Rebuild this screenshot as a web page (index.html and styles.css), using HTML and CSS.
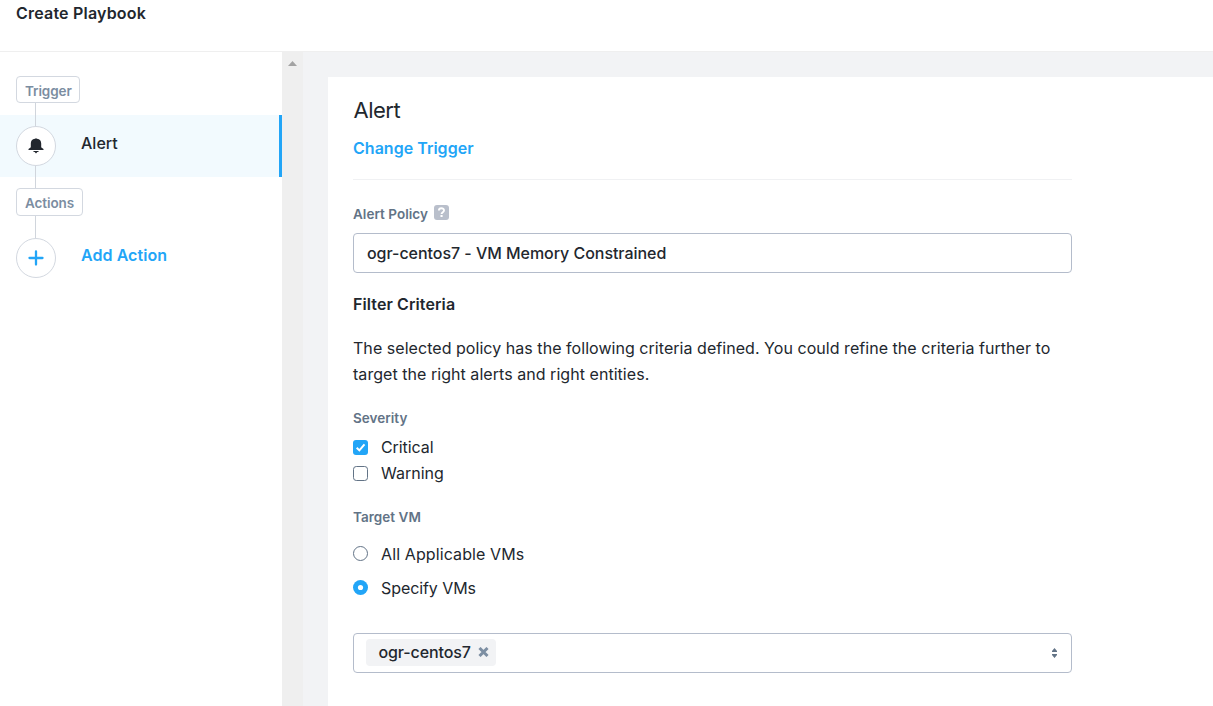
FILE: index.html
```html
<!DOCTYPE html>
<html lang="en">
<head>
<meta charset="utf-8">
<title>Create Playbook</title>
<link rel="stylesheet" href="styles.css">
</head>
<body>
<header class="header"><h1 class="header-title"><span>Create Playbook</span></h1></header>
<div class="workspace">
  <nav class="steps">
    <div class="tag tag-trigger"><span>Trigger</span></div>
    <div class="line line-gap"></div>
    <div class="step step-active">
      <div class="rail">
        <div class="line line-top"></div>
        <div class="node">
          <svg width="16" height="16" viewBox="0 0 16 16"><path fill="#22272e" d="M7 .7Q8-.1 9 .7C11.900 1.100 13.200 3 13.200 5.500V8.700c0 1 .7 1.200 2.300 2.300V12H.5v-1c1.600-1.100 2.300-1.300 2.300-2.300V5.500C2.800 3 4.100 1.100 7 .7zM5.500 13h5v1H9.300L8 15.500 6.700 14H5.500z"/></svg>
        </div>
        <div class="line line-fill"></div>
      </div>
      <span class="step-name alert-name">Alert</span>
    </div>
    <div class="line line-gap"></div>
    <div class="tag tag-actions"><span>Actions</span></div>
    <div class="step">
      <div class="rail">
        <div class="line line-add"></div>
        <div class="node">
          <svg width="16" height="16" viewBox="0 0 16 16"><path d="M8 1.500v13M1.500 8h13" fill="none" stroke="#22a5f7" stroke-width="2.300" stroke-linecap="round"/></svg>
        </div>
      </div>
      <a class="step-name add-name">Add Action</a>
    </div>
  </nav>
  <div class="scrollbar"><svg width="9" height="5" viewBox="0 0 9 5"><path fill="#a3a3a3" d="M0 5L4.500 0 9 5z"/></svg></div>
  <main class="content">
    <section class="panel">
      <h2 class="panel-title"><span>Alert</span></h2>
      <div class="change"><a>Change Trigger</a></div>
      <div class="label policy-label"><span>Alert Policy</span>
        <svg width="15" height="15" viewBox="0 0 15 15"><rect width="15" height="15" rx="3" fill="#b9bfcb"/><path d="M4.900 5.600C4.900 2.400 10 2.500 10 5.400 10 7.200 7.600 7.100 7.600 9" fill="none" stroke="#fff" stroke-width="1.900"/><rect x="6.500" y="10" width="2.100" height="2" fill="#fff"/></svg>
      </div>
      <div class="field policy-field"><span>ogr-centos7 - VM Memory Constrained</span></div>
      <h3 class="filter-title"><span>Filter Criteria</span></h3>
      <p class="description"><span>The selected policy has the following criteria defined. You could refine the criteria further to</span><br><span>target the right alerts and right entities.</span></p>
      <div class="label severity-label"><span>Severity</span></div>
      <div class="option check"><svg width="15" height="15" viewBox="0 0 15 15"><rect width="15" height="15" rx="3" fill="#22a5f7"/><path d="M3.700 7.700l2.700 2.700 5.100-6" fill="none" stroke="#fff" stroke-width="2"/></svg><span class="critical">Critical</span></div>
      <div class="option check"><svg width="15" height="15" viewBox="0 0 15 15"><rect x=".5" y=".5" width="14" height="14" rx="2.800" fill="#fff" stroke="#627386"/></svg><span>Warning</span></div>
      <div class="label target-label"><span>Target VM</span></div>
      <div class="option radio"><svg width="15" height="15" viewBox="0 0 15 15"><circle cx="7.500" cy="7.500" r="7" fill="#fff" stroke="#627386"/></svg><span class="all">All Applicable VMs</span></div>
      <div class="option radio"><svg width="15" height="15" viewBox="0 0 15 15"><circle cx="7.500" cy="7.500" r="7.500" fill="#22a5f7"/><circle cx="7.500" cy="7.500" r="2.600" fill="#fff"/></svg><span class="specify">Specify VMs</span></div>
      <div class="field vm-field">
        <div class="chip"><span>ogr-centos7</span><svg width="11" height="10" viewBox="0 0 11 10"><path d="M1.500 1l8 8M9.500 1l-8 8" stroke="#7d8fa3" stroke-width="3"/></svg></div>
        <svg class="sorter" width="5" height="10" viewBox="0 0 5 10"><path fill="#627386" d="M0 4V3L2.500 0 5 3v1zM0 6h5v1L2.500 10 0 7z"/></svg>
      </div>
    </section>
  </main>
</div>
</body>
</html>
```
FILE: styles.css
```css
* { box-sizing: border-box; }
body { margin: 0; height: 706px; overflow: hidden; background: #fff; color: #22272e; font: 400 16px/26px Inter, sans-serif; display: flex; flex-direction: column; }
svg { display: block; flex: none; }
h1, h2, h3, p { margin: 0; font-size: inherit; }
span, a { white-space: nowrap; }
.header { height: 52px; border-bottom: 1px solid #efefef; padding-left: 16px; flex: none; }
.header-title { font-weight: 600; letter-spacing: .2px; }
.workspace { flex: 1; display: flex; min-height: 0; }
.steps { width: 282px; padding-top: 24px; }
.tag { margin-left: 16px; border: 1px solid #d3d8e0; border-radius: 4px; padding: 2px 0 0 8px; color: #7b8da1; font-size: 13.5px; font-weight: 600; line-height: 24px; letter-spacing: -.1px; }
.tag-trigger { width: 64px; height: 27px; }
.tag-actions { width: 67px; height: 28px; }
.line { width: 1px; margin-left: 35px; background: #d0d5dc; }
.line-gap { height: 12px; }
.steps > .line:nth-of-type(4) { height: 11px; }
.step { display: flex; align-items: flex-start; }
.step-active { height: 62px; background: #f2fafe; border-right: 3px solid #22a5f7; }
.rail { width: 81px; height: 62px; display: flex; flex-direction: column; }
.line-top { height: 11px; }
.line-add { height: 22px; }
.line-fill { flex: 1; }
.node { width: 40px; height: 40px; flex: none; margin-left: 16px; border: 1px solid #d3d8e0; border-radius: 50%; background: #fff; display: flex; align-items: center; justify-content: center; }
.step-name { font-weight: 500; }
.alert-name { margin-top: 15px; }
.add-name { margin-top: 26px; color: #22a5f7; font-weight: 600; letter-spacing: .06px; }
.scrollbar { width: 21px; background: #efefef; padding: 9px 0 0 6px; }
.content { flex: 1; background: #f2f3f5; padding: 25px 0 0 25px; display: flex; }
.panel { flex: 1; background: #fff; padding: 17px 141px 0 25px; }
.panel-title { font-size: 22px; line-height: 32px; height: 33px; font-weight: 400; letter-spacing: -.5px; padding-left: .5px; }
.change { height: 53px; padding-top: 8px; border-bottom: 1px solid #f0f1f3; color: #22a5f7; font-weight: 600; letter-spacing: .02px; }
.label { color: #627386; font-size: 13.5px; line-height: 20px; font-weight: 600; letter-spacing: .03px; }
.policy-label { display: flex; gap: 6px; padding-top: 24px; height: 53px; }
.policy-label span { width: 75px; }
.policy-label svg { margin-top: 1px; }
.field { height: 40px; border: 1px solid #b4bccb; border-radius: 4px; display: flex; align-items: center; }
.policy-field { padding-left: 13px; font-weight: 500; letter-spacing: -.04px; }
.filter-title { margin-top: 18px; font-weight: 600; letter-spacing: .1px; }
.description { margin-top: 18px; letter-spacing: .045px; }
.severity-label { margin-top: 21px; margin-bottom: 6px; }
.option { display: flex; align-items: center; gap: 13px; }
.critical, .specify { letter-spacing: -.08px; }
.all { letter-spacing: .11px; }
.target-label { margin-top: 21px; margin-bottom: 10px; }
.radio { height: 34px; }
.radio svg { margin-bottom: 1px; }
.vm-field { margin-top: 28px; padding: 0 14px 0 12px; justify-content: space-between; }
.chip { height: 27px; width: 130px; margin-bottom: 1px; border-radius: 4px; background: #f2f3f5; padding: 0 7px 0 12.5px; display: flex; align-items: center; justify-content: space-between; font-weight: 500; letter-spacing: -.12px; }
.chip span { margin-bottom: 2px; }
.chip svg { margin-bottom: 1px; }
```
